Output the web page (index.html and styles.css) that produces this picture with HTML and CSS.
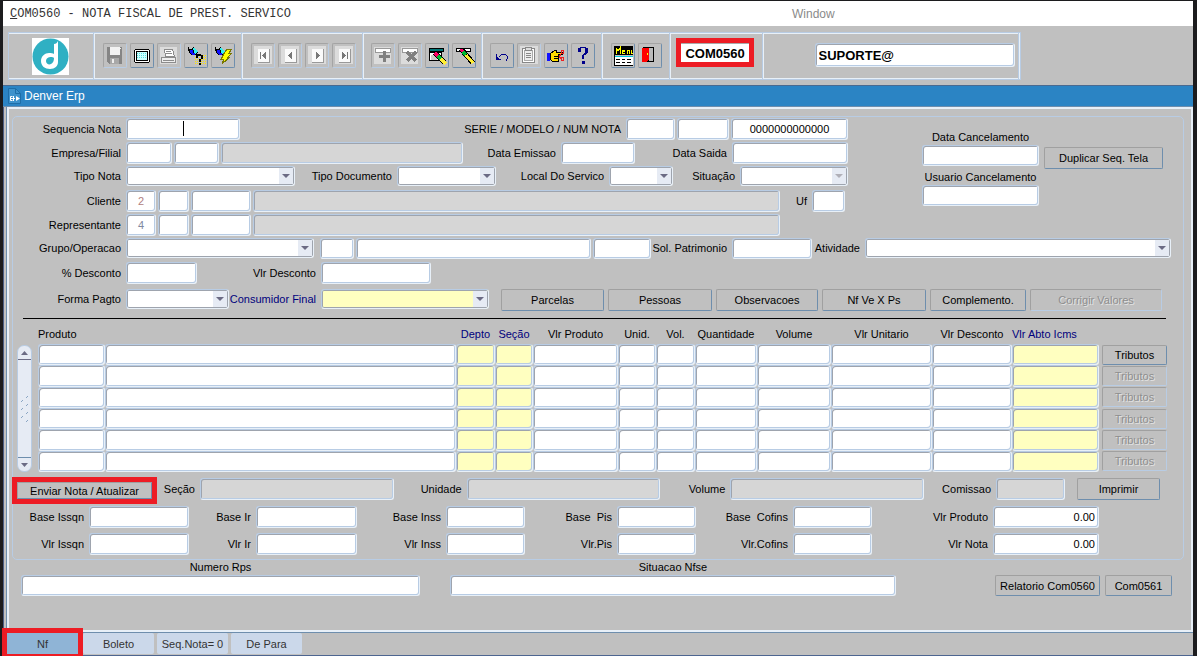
FILE: index.html
```
<!DOCTYPE html>
<html lang="pt-BR">

<head>
    <meta charset="UTF-8">
    <meta name="viewport" content="width=device-width, initial-scale=1.0">
    <title>COM0560 - NOTA FISCAL DE PREST. SERVICO</title>
    <link rel="stylesheet" href="styles.css">
</head>

<body>
    <header class="menubar">
        <span class="menubar-title"><u>C</u>OM0560 - NOTA FISCAL DE PREST. SERVICO</span>
        <a class="menubar-link" href="#">Window</a>
    </header>

    <div class="toolbar">
        <div class="toolbar-frame">
            <div class="tools tools-logo">
                <svg width="37" height="37" viewBox="0 0 37 37">
                    <rect width="37" height="37" fill="#fff" />
                    <circle cx="18.5" cy="18.5" r="18" fill="#2fb0c3" />
                    <path d="M22 6c2 0 3-1 4-3v21c0 4-3 7-8 7s-9-3-9-8 4-8 8-8c2 0 4 0 5 1z" fill="#fff" />
                    <path d="M22 20c-2-2-8-1-8 3 0 3 3 4 5 3s3-3 3-6z" fill="#2fb0c3" />
                </svg>
            </div>
            <div class="tools tools-file">
                <button class="tool" disabled aria-label="Salvar">
                    <svg viewBox="0 0 22 23">
                        <path d="M3 3h15v17H5l-2-2z" fill="#858585" />
                        <path d="M6 3h10v8H6z" fill="#f2f2f2" />
                        <path d="M6 14h9v6H6z" fill="#a8a8a8" />
                        <path d="M8 15h2v4H8zM16 4h1v1h-1z" fill="#eee" />
                    </svg>
                </button>
                <button class="tool" aria-label="Tela">
                    <svg viewBox="0 0 22 23">
                        <path d="M4 5h14v1h1v12h-1v1H4v-1H3V6h1z" fill="#000" />
                        <path d="M4 6h14v12H4z" fill="#fff" />
                        <path d="M5 7h12v10H5z" fill="#000" />
                        <path d="M6 8h10v8H6z" fill="#cff" />
                        <path d="M6 9.500h10M6 11.500h10M6 13.500h10" stroke="#5dd" stroke-dasharray="1 1" />
                    </svg>
                </button>
                <button class="tool" disabled aria-label="Imprimir tela">
                    <svg viewBox="0 0 22 23">
                        <path d="M2 3h17v17H2z" fill="#dcdcdc" />
                        <path d="M6.500 5.500h8l2 7h-9z" fill="#fff" stroke="#8c8c8c" />
                        <path d="M8 7.500h5M8 9.500h6" stroke="#8c8c8c" />
                        <path d="M3.500 13.500h14v5h-14z" fill="#eee" stroke="#8c8c8c" />
                        <path d="M5 16.500h11" stroke="#8c8c8c" />
                    </svg>
                </button>
                <button class="tool" aria-label="Entrar consulta">
                    <svg viewBox="0 0 22 23">
                        <path d="M3 3h1v2h2l3-2 4 5-3 3H7L4 9V7H3z" fill="#000" />
                        <path d="M5 6h3v3h2v2H7L5 9z" fill="#11f" />
                        <path d="M8 4h2l3 4-3 2z" fill="#3ee" />
                        <path d="M9.500 13.500h11M9.500 15.500h11M9.500 17.500h11M9.500 19.500h11M11.500 11.500h9" stroke="#ffe800" stroke-dasharray="1 1" />
                        <path d="M11 10h5v2h-3v2h-2zM16 11h2v4h-2zM14 15h2v3h-2zM14 19h2v2h-2z" fill="#000" />
                    </svg>
                </button>
                <button class="tool" aria-label="Executar consulta">
                    <svg viewBox="0 0 22 23">
                        <path d="M3 3h1v2h2l3-2 4 5-3 3H7L4 9V7H3z" fill="#000" />
                        <path d="M5 6h3v3h2v2H7L5 9z" fill="#11f" />
                        <path d="M8 4h2l3 4-3 2z" fill="#3ee" />
                        <path d="M15 5h5l-3 4h3l-4 4h2l-8 7 2-5H9l3-4h-1z" fill="#ff0" stroke="#770" />
                    </svg>
                </button>
            </div>
            <div class="tools tools-nav">
                <button class="tool" disabled aria-label="Primeiro">
                    <svg viewBox="0 0 22 23">
                        <path d="M2 2h18v18H2z" fill="#dcdcdc" />
                        <path d="M6 5h12v14H6z" fill="#999" />
                        <path d="M6 5h11v13H6z" fill="#fafafa" />
                        <path d="M8 8h1v7H8zM14 8v7l-4-3.500z" fill="#777" />
                    </svg>
                </button>
                <button class="tool" disabled aria-label="Anterior">
                    <svg viewBox="0 0 22 23">
                        <path d="M2 2h18v18H2z" fill="#dcdcdc" />
                        <path d="M6 5h12v14H6z" fill="#999" />
                        <path d="M6 5h11v13H6z" fill="#fafafa" />
                        <path d="M13 8v7l-4-3.500z" fill="#777" />
                    </svg>
                </button>
                <button class="tool" disabled aria-label="Proximo">
                    <svg viewBox="0 0 22 23">
                        <path d="M2 2h18v18H2z" fill="#dcdcdc" />
                        <path d="M6 5h12v14H6z" fill="#999" />
                        <path d="M6 5h11v13H6z" fill="#fafafa" />
                        <path d="M10 8v7l4-3.500z" fill="#777" />
                    </svg>
                </button>
                <button class="tool" disabled aria-label="Ultimo">
                    <svg viewBox="0 0 22 23">
                        <path d="M2 2h18v18H2z" fill="#dcdcdc" />
                        <path d="M6 5h12v14H6z" fill="#999" />
                        <path d="M6 5h11v13H6z" fill="#fafafa" />
                        <path d="M9 8v7l4-3.500zM14 8h1v7h-1z" fill="#777" />
                    </svg>
                </button>
            </div>
            <div class="tools tools-record">
                <button class="tool" disabled aria-label="Inserir">
                    <svg viewBox="0 0 22 23">
                        <path d="M2 3h17v17H2z" fill="#dcdcdc" />
                        <path d="M3.500 4.500h15v4h-15z" fill="#fff" stroke="#999" />
                        <path d="M11 7h3v4h4v3h-4v4h-3v-4H7v-3h4z" fill="#808080" />
                    </svg>
                </button>
                <button class="tool" disabled aria-label="Excluir">
                    <svg viewBox="0 0 22 23">
                        <path d="M2 3h17v17H2z" fill="#dcdcdc" />
                        <path d="M3.500 4.500h15v4h-15z" fill="#fff" stroke="#999" />
                        <path d="M8 8l9 9M17 8l-9 9" stroke="#808080" stroke-width="3" />
                    </svg>
                </button>
                <button class="tool" aria-label="Limpar tela">
                    <svg viewBox="0 0 22 23">
                        <path d="M3.500 4.500h14v3h-14z" fill="#077" stroke="#000" />
                        <path d="M3.500 8.500h12v8h-12z" fill="#fff" stroke="#000" />
                        <path d="M5 11h6v5H5z" fill="#ccc" />
                        <path d="M9 9l10 10" stroke="#000" stroke-width="5" />
                        <path d="M9 9l3 3" stroke="#f06" stroke-width="3" />
                        <path d="M12 12l3 3" stroke="#0b3" stroke-width="3" />
                        <path d="M15 15l5 5" stroke="#fe3" stroke-width="3" />
                    </svg>
                </button>
                <button class="tool" aria-label="Limpar registro">
                    <svg viewBox="0 0 22 23">
                        <path d="M3.500 4.500h14v3h-14z" fill="#fff" stroke="#000" />
                        <path d="M8 5l12 14" stroke="#000" stroke-width="5" />
                        <path d="M8 5l3 4" stroke="#f06" stroke-width="3" />
                        <path d="M10 8l3 3" stroke="#0b3" stroke-width="3" />
                        <path d="M13 11l7 8" stroke="#fe3" stroke-width="3" />
                    </svg>
                </button>
            </div>
            <div class="tools tools-edit">
                <button class="tool" aria-label="Desfazer">
                    <svg viewBox="0 0 22 23">
                        <path d="M5 10h1v3h1v1h1v1h2v1H5zM8 12h1v1H8zM9 11h1v1H9zM10 10h5v1h-5zM15 11h1v1h-1zM16 12h1v3h-1zM15 15h1v2h-1z" fill="#00008b" />
                    </svg>
                </button>
                <button class="tool" disabled aria-label="Lista">
                    <svg viewBox="0 0 22 23">
                        <path d="M2 2h18v18H2z" fill="#dcdcdc" />
                        <path d="M4.500 4.500h12v14h-12z" fill="#fff" stroke="#888" />
                        <path d="M6.500 6.500h8v10h-8z" fill="#eee" stroke="#aaa" />
                        <path d="M7.500 3.500h6v3h-6z" fill="#ddd" stroke="#888" />
                        <path d="M8 9.500h5M8 11.500h5M8 13.500h5" stroke="#888" />
                    </svg>
                </button>
                <button class="tool" aria-label="Editar">
                    <svg viewBox="0 0 22 23">
                        <path d="M2 9h3v8H2z" fill="#11f" />
                        <path d="M5.500 9.500l4-3h2v2h6v2h-4v7h-6l-2-2z" fill="#fd0" stroke="#000" />
                        <path d="M9 12.500h4M9 14.500h4" stroke="#000" />
                        <path d="M14 12.500l2-2M14 12.500l2 2M16.500 6.500h2v3h-2zM16.500 13.500h2v3h-2z" fill="none" stroke="#e22" />
                    </svg>
                </button>
                <button class="tool" aria-label="Ajuda">
                    <svg viewBox="0 0 22 23">
                        <path d="M8 3h6v1H8zM6 4h3v4H6zM13 4h3v5h-3zM12 9h3v1h-3zM11 10h3v1h-3zM10 11h2v4h-2zM10 17h3v3h-3z" fill="#00008b" />
                    </svg>
                </button>
            </div>
            <div class="tools tools-exit">
                <button class="tool" aria-label="Menu">
                    <svg viewBox="0 0 22 23">
                        <path d="M2 2h19v9H2z" fill="#000" />
                        <path d="M4 10V4l2 3 2-3v6M13 6h-3v3h3M10 7.500h3M15 10V6h2v4M19 6v3h2" fill="none" stroke="#ff0" />
                        <path d="M2 12h19v10H2z" fill="#fff" />
                        <path d="M2 12h19v1H2z" fill="#0cd" />
                        <path d="M4 15.500h4M10 15.500h3M15 15.500h4M4 18.500h4M10 18.500h3M15 18.500h4M2.500 11v11M2 21.500h19" stroke="#000" />
                    </svg>
                </button>
                <button class="tool" aria-label="Sair">
                    <svg viewBox="0 0 22 23">
                        <path d="M4 3h11v15H4z" fill="#000" />
                        <path d="M10 4h4v13h-4z" fill="#bbb" />
                        <path d="M3 4h7v12l-3 2H3z" fill="#f00" />
                        <path d="M8 9h1v2H8z" fill="#ff0" />
                    </svg>
                </button>
            </div>
            <div class="tools tools-code">
                <input class="code marked" aria-label="Programa" value="COM0560">
            </div>
            <div class="tools tools-user">
                <input class="field user" aria-label="Usuario" value="SUPORTE@">
            </div>
        </div>
    </div>

    <div class="titlebar">
        <svg width="13" height="16" viewBox="0 0 13 16">
            <path d="M.5.500h7l5 5v10H.5z" fill="#3d92cc" stroke="#1e6ea8" />
            <path d="M7.500.500v5h5" fill="none" stroke="#1e6ea8" />
            <path d="M5.500 8v5M3 10.500h4M4.500 8.500h-2v4h2" fill="none" stroke="#fff" />
            <path d="M8 8l4 2.500L8 13z" fill="#fff" />
        </svg>
        Denver Erp
    </div>

    <main class="workspace">
        <div class="panel">
            <form class="group">
                <div class="top">
                    <div class="top-fields">
                        <div class="row row-number">
                            <label for="sequencia">Sequencia Nota</label>
                            <span class="caret"><input class="field" id="sequencia"></span>
                            <label for="serie">SERIE / MODELO / NUM NOTA</label>
                            <input class="field" id="serie">
                            <input class="field" aria-label="Modelo">
                            <input class="field center" aria-label="Numero nota" value="0000000000000">
                        </div>
                        <div class="row row-company">
                            <label for="empresa">Empresa/Filial</label>
                            <input class="field" id="empresa">
                            <input class="field" aria-label="Filial">
                            <input class="field" aria-label="Nome da empresa" disabled>
                            <label for="emissao">Data Emissao</label>
                            <input class="field" id="emissao">
                            <label for="saida">Data Saida</label>
                            <input class="field" id="saida">
                        </div>
                        <div class="row row-type">
                            <label for="tipo-nota">Tipo Nota</label>
                            <span class="list"><select id="tipo-nota"><option></option></select></span>
                            <label for="tipo-doc">Tipo Documento</label>
                            <span class="list"><select id="tipo-doc"><option></option></select></span>
                            <label for="local">Local Do Servico</label>
                            <span class="list"><select id="local"><option></option></select></span>
                            <label for="situacao">Situação</label>
                            <span class="list list-off"><select id="situacao" disabled><option></option></select></span>
                        </div>
                        <div class="row row-party">
                            <label for="cliente">Cliente</label>
                            <input class="field center hint-red" id="cliente" value="2">
                            <input class="field" aria-label="Filial do cliente">
                            <input class="field" aria-label="Codigo do cliente">
                            <input class="field" aria-label="Nome do cliente" disabled>
                            <label for="uf">Uf</label>
                            <input class="field" id="uf">
                        </div>
                        <div class="row row-party">
                            <label for="representante">Representante</label>
                            <input class="field center hint-blue" id="representante" value="4">
                            <input class="field" aria-label="Filial do representante">
                            <input class="field" aria-label="Codigo do representante">
                            <input class="field" aria-label="Nome do representante" disabled>
                        </div>
                    </div>
                    <div class="cancel">
                        <label for="data-canc">Data Cancelamento</label>
                        <input class="field" id="data-canc">
                        <label for="usuario-canc">Usuario Cancelamento</label>
                        <input class="field" id="usuario-canc">
                    </div>
                    <button type="button" class="btn btn-duplicate">Duplicar Seq. Tela</button>
                </div>

                <div class="row row-operation">
                    <label for="grupo">Grupo/Operacao</label>
                    <span class="list list-group"><select id="grupo"><option></option></select></span>
                    <input class="field" aria-label="Codigo da operacao">
                    <input class="field" aria-label="Descricao da operacao">
                    <input class="field" aria-label="Natureza">
                    <label for="patrimonio">Sol. Patrimonio</label>
                    <input class="field" id="patrimonio">
                    <label for="atividade">Atividade</label>
                    <span class="list"><select id="atividade"><option></option></select></span>
                </div>
                <div class="row row-discount">
                    <label for="perc-desc">% Desconto</label>
                    <input class="field" id="perc-desc">
                    <label for="vlr-desc">Vlr Desconto</label>
                    <input class="field" id="vlr-desc">
                </div>
                <div class="row row-payment">
                    <label for="forma">Forma Pagto</label>
                    <span class="list"><select id="forma"><option></option></select></span>
                    <label for="consumidor" class="blue">Consumidor Final</label>
                    <span class="list yellow"><select id="consumidor"><option></option></select></span>
                    <div class="actions">
                        <button type="button" class="btn">Parcelas</button>
                        <button type="button" class="btn">Pessoas</button>
                        <button type="button" class="btn">Observacoes</button>
                        <button type="button" class="btn">Nf Ve X Ps</button>
                        <button type="button" class="btn">Complemento.</button>
                        <button type="button" class="btn" disabled>Corrigir Valores</button>
                    </div>
                </div>

                <hr>

                <div class="items">
                    <div class="scroll">
                        <button type="button" class="scroll-btn" aria-label="Subir">
                            <svg width="7" height="4" viewBox="0 0 7 4"><path d="M0 4h7L3.500 0z" fill="#6b6b84" /></svg>
                        </button>
                        <svg width="9" height="28" viewBox="0 0 9 28">
                            <path d="M1 7l2-2M6 3l2-2M1 15l2-2M6 11l2-2M1 23l2-2M6 19l2-2M6 27l2-2" stroke="#8ba6c4" />
                        </svg>
                        <button type="button" class="scroll-btn" aria-label="Descer">
                            <svg width="7" height="4" viewBox="0 0 7 4"><path d="M0 0h7L3.500 4z" fill="#6b6b84" /></svg>
                        </button>
                    </div>
                    <table>
                        <colgroup>
                            <col class="c-code">
                            <col>
                            <col class="c-depto">
                            <col class="c-secao">
                            <col class="c-produto">
                            <col class="c-unid">
                            <col class="c-vol">
                            <col class="c-qtd">
                            <col class="c-volume">
                            <col class="c-unitario">
                            <col class="c-desconto">
                            <col class="c-icms">
                            <col class="c-btn">
                        </colgroup>
                        <thead>
                            <tr>
                                <th class="left" colspan="2">Produto</th>
                                <th class="blue">Depto</th>
                                <th class="blue">Seção</th>
                                <th>Vlr Produto</th>
                                <th>Unid.</th>
                                <th>Vol.</th>
                                <th>Quantidade</th>
                                <th>Volume</th>
                                <th>Vlr Unitario</th>
                                <th>Vlr Desconto</th>
                                <th class="blue left">Vlr Abto Icms</th>
                                <th></th>
                            </tr>
                        </thead>
                        <tbody id="item-rows"></tbody>
                    </table>
                </div>

                <div class="row row-info">
                    <button type="button" class="btn btn-send marked">Enviar Nota / Atualizar</button>
                    <label for="secao">Seção</label>
                    <input class="field" id="secao" disabled>
                    <label for="unidade">Unidade</label>
                    <input class="field" id="unidade" disabled>
                    <label for="volume">Volume</label>
                    <input class="field" id="volume" disabled>
                    <label for="comissao">Comissao</label>
                    <input class="field" id="comissao" disabled>
                    <button type="button" class="btn btn-print">Imprimir</button>
                </div>
                <div class="row row-tax">
                    <label for="base-issqn">Base Issqn</label>
                    <input class="field" id="base-issqn">
                    <label for="base-ir">Base Ir</label>
                    <input class="field" id="base-ir">
                    <label for="base-inss">Base Inss</label>
                    <input class="field" id="base-inss">
                    <label for="base-pis">Base&nbsp; Pis</label>
                    <input class="field" id="base-pis">
                    <label for="base-cofins">Base&nbsp; Cofins</label>
                    <input class="field" id="base-cofins">
                    <label for="vlr-produto">Vlr Produto</label>
                    <input class="field right" id="vlr-produto" value="0.00">
                </div>
                <div class="row row-tax">
                    <label for="vlr-issqn">Vlr Issqn</label>
                    <input class="field" id="vlr-issqn">
                    <label for="vlr-ir">Vlr Ir</label>
                    <input class="field" id="vlr-ir">
                    <label for="vlr-inss">Vlr Inss</label>
                    <input class="field" id="vlr-inss">
                    <label for="vlr-pis">Vlr.Pis</label>
                    <input class="field" id="vlr-pis">
                    <label for="vlr-cofins">Vlr.Cofins</label>
                    <input class="field" id="vlr-cofins">
                    <label for="vlr-nota">Vlr Nota</label>
                    <input class="field right" id="vlr-nota" value="0.00">
                </div>
            </form>

            <div class="bottom">
                <div class="bottom-field">
                    <label for="rps">Numero Rps</label>
                    <input class="field" id="rps">
                </div>
                <div class="bottom-field">
                    <label for="nfse">Situacao Nfse</label>
                    <input class="field" id="nfse">
                </div>
                <div class="bottom-actions">
                    <button type="button" class="btn">Relatorio Com0560</button>
                    <button type="button" class="btn">Com0561</button>
                </div>
            </div>
        </div>
    </main>

    <nav class="tabs">
        <button class="tab tab-active marked">Nf</button>
        <button class="tab">Boleto</button>
        <button class="tab">Seq.Nota= 0</button>
        <button class="tab">De Para</button>
    </nav>

    <template id="template-row">
        <tr>
            <td><input aria-label="Produto"></td>
            <td><input aria-label="Descricao"></td>
            <td class="yellow"><input aria-label="Depto"></td>
            <td class="yellow"><input aria-label="Seção"></td>
            <td><input aria-label="Vlr Produto"></td>
            <td><input aria-label="Unid."></td>
            <td><input aria-label="Vol."></td>
            <td><input aria-label="Quantidade"></td>
            <td><input aria-label="Volume"></td>
            <td><input aria-label="Vlr Unitario"></td>
            <td><input aria-label="Vlr Desconto"></td>
            <td class="yellow"><input aria-label="Vlr Abto Icms"></td>
            <td class="cell-btn"><button type="button" class="btn" disabled>Tributos</button></td>
        </tr>
    </template>
    <script>
        const template = document.getElementById("template-row")
        const rows = document.getElementById("item-rows")

        for (let i = 0; i < 6; i++) {
            rows.appendChild(document.importNode(template.content, true))
        }
        // only the current record can open its taxes
        rows.querySelector(".btn").disabled = false
    </script>
</body>

</html>
```
FILE: styles.css
```
:root {
    --grey: #c0c0c0;
    --edge: #b8cce4;
    --light: #e8f0f8;
    --dark: #9ea4ae;
    --steel: #6e8ead;
    --mark: #ed1c24;
    --yellow: #ffffc0;
}

* {
    box-sizing: border-box;
}

body {
    display: flex;
    flex-direction: column;
    min-height: 100vh;
    margin: 0;
    padding: 1px 4px 0 3px;
    background-color: #1c1c1e;
    color: #000;
    font-family: "Liberation Sans", Arial, sans-serif;
    font-size: 11px;
}

button,
input,
select {
    margin: 0;
    padding: 0;
    border: 0;
    border-radius: 0;
    font: inherit;
    color: inherit;
}

input,
select {
    min-width: 0;
    width: 100%;
}

.blue {
    color: #00007d;
}

.center {
    text-align: center;
}

/* menu bar */
.menubar {
    display: flex;
    align-items: center;
    height: 25px;
    padding-left: 7px;
    background-color: #fff;
}

.menubar-title {
    width: 782px;
    color: #333;
    font-family: "Liberation Mono", monospace;
    font-size: 12px;
}

.menubar-link {
    color: #8a8a8a;
    font-size: 12px;
    text-decoration: none;
}

/* toolbar */
.toolbar {
    display: flex;
    height: 59px;
    padding: 6px 5px 5px;
    background-color: var(--grey);
}

.toolbar-frame {
    display: flex;
    border: 1px solid var(--edge);
    box-shadow: inset 0 1px var(--light), inset 0 -1px var(--light);
}

.tools {
    display: flex;
    justify-content: center;
    align-items: flex-start;
    gap: 3px;
    padding-top: 10px;
    border-right: 1px solid var(--light);
    box-shadow: inset -1px 0 var(--edge);
}

.tools-logo {
    width: 86px;
    align-items: center;
    padding: 0 2px 0 0;
}

.tools-file {
    width: 148px;
}

.tools-nav {
    width: 121px;
}

.tools-record {
    width: 119px;
}

.tools-edit {
    width: 120px;
}

.tools-exit {
    width: 68px;
}

.tools-code {
    width: 93px;
    padding-right: 4px;
}

.tools-user {
    width: 256px;
    padding-left: 46px;
}

.tool {
    width: 24px;
    height: 25px;
    background-color: var(--grey);
    border: 1px solid #a4a4a4;
    border-right-color: var(--steel);
    border-bottom-color: var(--steel);
    border-radius: 2px;
}

.tool:disabled {
    border-right-color: var(--edge);
    border-bottom-color: var(--edge);
}

.tool svg {
    display: block;
    width: 22px;
    height: 23px;
    shape-rendering: crispEdges;
}

.code {
    width: 68px;
    height: 19px;
    background-color: #fff;
    border-top: 1px solid #aaa;
    font-size: 13px;
    font-weight: bold;
    text-align: center;
}

.titlebar {
    display: flex;
    align-items: center;
    gap: 3px;
    height: 22px;
    padding-left: 5px;
    background-color: #2b84c4;
    border-top: 1px solid #4a6a90;
    border-bottom: 1px solid var(--steel);
    color: #fff;
    font-size: 12px;
}

/* work area */
.workspace {
    display: flex;
    flex: 1;
    padding-left: 3px;
    background-color: var(--grey);
    border-left: 1px solid #4d5f85;
}

.panel {
    flex: 1;
    border: 2px solid var(--light);
    box-shadow: -1px 0 var(--steel);
}

.group {
    margin: 7px 7px 0 3px;
    padding: 1px 1px 5px 0;
    border: 1px solid var(--edge);
    border-radius: 5px;
}

.field {
    height: 22px;
    padding: 0 3px;
    background-color: #fff;
    border: 1px solid var(--light);
    border-top-color: var(--edge);
    border-left-color: var(--edge);
    border-radius: 3px;
    box-shadow: inset 1px 1px var(--dark), inset -1px -1px var(--edge);
}

.field:disabled {
    background-color: #d6d6d6;
}

.field.user {
    width: 200px;
    height: 24px;
    font-size: 13px;
    font-weight: bold;
}

.field.right {
    text-align: right;
}

.hint-red {
    color: #b08080;
}

.hint-blue {
    color: #8088a0;
}

.list {
    position: relative;
    height: 20px;
    background-color: #fff;
    border: 1px solid var(--light);
    border-top-color: var(--edge);
    border-left-color: var(--edge);
    border-radius: 3px;
    box-shadow: inset 0 0 0 1px var(--dark);
}

.list select {
    display: block;
    height: 18px;
    padding: 0 18px 0 4px;
    background: transparent;
    appearance: none;
}

.list::before {
    content: "";
    position: absolute;
    top: 1px;
    right: 1px;
    bottom: 1px;
    width: 14px;
    background-color: #e6ebf4;
}

.list::after {
    content: "";
    position: absolute;
    top: 7px;
    right: 4px;
    border: 4px solid transparent;
    border-top-color: #6b6b84;
    border-bottom-width: 0;
}

.list-off::after {
    border-top-color: #b0b0b8;
}

.yellow {
    background-color: var(--yellow);
}

.btn {
    height: 22px;
    background-color: var(--grey);
    border: 1px solid #a0a0a0;
    border-right-color: var(--steel);
    border-bottom-color: var(--steel);
    border-radius: 2px;
    white-space: nowrap;
}

.btn:disabled {
    border-right-color: var(--edge);
    border-bottom-color: var(--edge);
    color: #8e8e8e;
    text-shadow: 1px 1px #e4e4e4;
}

/* form rows */
.row {
    display: grid;
    column-gap: 2px;
    align-items: start;
    height: 24px;
}

.row label {
    display: flex;
    align-items: center;
    justify-content: flex-end;
    height: 22px;
    padding-right: 3px;
    white-space: nowrap;
}

.top {
    display: flex;
}

.top-fields {
    flex: 1;
}

.row-number {
    grid-template-columns: 111px 114px 1fr 49px 52px 117px;
}

.row-company {
    grid-template-columns: 111px 46px 45px 1fr 94px 74px 93px 116px;
}

.row-type {
    grid-template-columns: 111px 1fr 98px 99px 109px 64px 63px 108px;
}

.row-party {
    grid-template-columns: 111px 30px 31px 60px 1fr 28px 33px;
    padding-right: 3px;
}

.row-operation {
    grid-template-columns: 111px 192px 34px 235px 58px 77px 80px 49px 1fr;
    padding-right: 11px;
}

.row-discount {
    grid-template-columns: 111px 71px 120px 110px;
    height: 27px;
}

.row-payment {
    grid-template-columns: 111px 103px 88px 168px 1fr;
    height: 29px;
}

.row-info {
    grid-template-columns: 135px 44px 1fr 69px 1fr 66px 1fr 68px 69px 93px;
    height: 28px;
    margin-top: 6px;
    padding: 0 22px 0 4px;
}

.row-tax {
    grid-template-columns: 74px 100px 63px 101px 85px 79px 88px 79px 93px 79px 1fr 106px;
    height: 27px;
    padding-right: 83px;
}

.row-tax:last-child {
    height: 21px;
}

.row-type label,
.row-operation label,
.row-payment label {
    height: 20px;
}

.row-operation .field {
    height: 21px;
}

.list-group {
    margin-right: 4px;
}

.caret {
    position: relative;
}

.caret::after {
    content: "";
    position: absolute;
    top: 3px;
    left: 50%;
    width: 1px;
    height: 15px;
    background-color: #000;
}

.cancel {
    display: flex;
    flex-direction: column;
    width: 117px;
    margin: 8px 5px 0 74px;
    text-align: center;
    white-space: nowrap;
}

.cancel label {
    padding-top: 4px;
    line-height: 15px;
}

.cancel .field {
    height: 21px;
}

.btn-duplicate {
    width: 119px;
    margin: 29px 19px 0 0;
}

.actions {
    display: grid;
    grid-template-columns: 103px 104px 102px 104px 96px 1fr;
    gap: 4px;
    padding: 0 20px 0 10px;
}

.btn-send {
    align-self: start;
    height: 17px;
    margin-top: 4px;
}

.btn-print {
    margin-left: 10px;
}

hr {
    height: 1px;
    margin: 0 16px 0 10px;
    border: 0;
    background-color: #000;
}

/* items */
.items {
    display: flex;
    gap: 6px;
    padding: 0 15px 0 4px;
}

.scroll {
    display: flex;
    flex-direction: column;
    align-items: center;
    justify-content: space-between;
    width: 15px;
    margin-top: 26px;
    background-color: #e6ebf4;
    border: 1px solid var(--edge);
    border-radius: 7px;
}

.scroll-btn {
    display: flex;
    align-items: center;
    justify-content: center;
    width: 13px;
    height: 14px;
    background: transparent;
    border-bottom: 1px solid #6b6b84;
}

.scroll-btn:last-child {
    border-top: 1px solid var(--steel);
    border-bottom: 0;
}

table {
    flex: 1;
    width: 100%;
    height: 153px;
    table-layout: fixed;
    border-collapse: separate;
    border-spacing: 0;
}

th {
    height: 25px;
    padding: 5px 0 0;
    font-weight: normal;
    white-space: nowrap;
}

th.left {
    text-align: left;
}

td {
    padding: 0;
    border: 1px solid var(--light);
    border-top-color: var(--edge);
    border-left-color: var(--edge);
    border-radius: 3px;
    box-shadow: inset 1px 1px var(--dark), inset -1px -1px var(--edge);
}

td:not(.yellow, .cell-btn) {
    background-color: #fff;
}

td input {
    display: block;
    height: 18px;
    padding: 0 3px;
    background: transparent;
}

.cell-btn {
    padding-left: 3px;
    border: 0;
    box-shadow: none;
}

.cell-btn .btn {
    display: block;
    width: 100%;
    height: 20px;
}

.c-code {
    width: 67px;
}

.c-depto,
.c-vol {
    width: 39px;
}

.c-secao,
.c-unid {
    width: 38px;
}

.c-produto {
    width: 85px;
}

.c-qtd {
    width: 62px;
}

.c-volume {
    width: 74px;
}

.c-unitario {
    width: 101px;
}

.c-desconto {
    width: 80px;
}

.c-icms {
    width: 87px;
}

.c-btn {
    width: 68px;
}

/* below the group */
.bottom {
    display: grid;
    grid-template-columns: 399fr 446fr auto;
    column-gap: 30px;
    padding: 0 19px 0 12px;
}

.bottom-field {
    text-align: center;
}

.bottom-field label {
    display: block;
    line-height: 15px;
}

.bottom-actions {
    display: grid;
    grid-template-columns: 105px 67px;
    gap: 5px;
    padding: 15px 0 0 69px;
}

.bottom-field .field,
.bottom-actions .btn {
    height: 21px;
}

/* tabs */
.tabs {
    display: flex;
    gap: 3px;
    height: 24px;
    padding-left: 4px;
    background-color: var(--grey);
    border-top: 1px solid var(--steel);
    border-bottom: 1px solid #4d6590;
}

.tab {
    width: 71px;
    height: 21px;
    background-color: #cbd8ea;
    border-radius: 2px;
    color: #333;
}

.tab-active {
    margin-right: 2px;
    background-color: #8fb4d6;
}

.marked {
    border-radius: 0;
    outline: 5px solid var(--mark);
}
```
